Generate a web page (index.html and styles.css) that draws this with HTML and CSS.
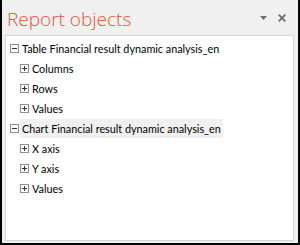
FILE: index.html
```html
<!DOCTYPE html>
<html>
<head>
<meta charset="utf-8">
<link rel="stylesheet" href="styles.css">
</head>
<body>
<div class="panel">
  <div class="header">
    <div class="title">Report objects</div>
    <div class="tools">
      <svg class="ico" width="7" height="4" viewBox="0 0 7 4"><path d="M0 0H7L3.5 4Z" fill="#6d6d6d"/></svg>
      <svg class="ico close" width="8" height="8" viewBox="0 0 8 8"><path d="M0.7 0.7L7.3 7.3M7.3 0.7L0.7 7.3" stroke="#6d6d6d" stroke-width="1.8"/></svg>
    </div>
  </div>
  <div class="box">
    <div class="node">
      <div class="row l0"><span class="tg minus"></span><span class="lbl">Table Financial result dynamic analysis_en</span></div>
      <div class="children">
        <div class="row l1"><span class="tg plus"></span><span class="lbl">Columns</span></div>
        <div class="row l1"><span class="tg plus"></span><span class="lbl">Rows</span></div>
        <div class="row l1"><span class="tg plus"></span><span class="lbl">Values</span></div>
      </div>
    </div>
    <div class="node">
      <div class="row l0"><span class="tg minus"></span><span class="lbl sel">Chart Financial result dynamic analysis_en</span></div>
      <div class="children">
        <div class="row l1"><span class="tg plus"></span><span class="lbl">X axis</span></div>
        <div class="row l1"><span class="tg plus"></span><span class="lbl">Y axis</span></div>
        <div class="row l1"><span class="tg plus"></span><span class="lbl">Values</span></div>
      </div>
    </div>
  </div>
</div>
</body>
</html>
```
FILE: styles.css
```css
html, body { margin: 0; padding: 0; }
body { width: 300px; height: 245px; overflow: hidden; }
.panel {
  box-sizing: border-box;
  width: 300px;
  height: 245px;
  background: #f0f0f0;
  border-left: 2px solid #000;
  border-right: 2px solid #000;
  border-bottom: 2px solid #000;
  display: flex;
  flex-direction: column;
  font-family: "Open Sans", sans-serif;
}
.header {
  height: 35px;
  display: flex;
  align-items: flex-start;
  justify-content: space-between;
}
.title {
  color: #e8513b;
  font-size: 19px;
  font-weight: 300;
  line-height: 26px;
  margin-left: 5px;
  margin-top: 6px;
}
.tools {
  display: flex;
  align-items: center;
  gap: 11px;
  margin-top: 14px;
  margin-right: 12px;
}
.box {
  flex: 1;
  margin: 0 4px 2px 3px;
  background: #fff;
  border: 1px solid #d6d6d6;
  padding-top: 2px;
  font-family: "Lato", sans-serif;
  font-size: 10.8px;
  color: #000;
}
.row {
  display: flex;
  align-items: center;
  height: 20px;
}
.l0 { padding-left: 4px; }
.l1 { padding-left: 14px; }
.tg {
  box-sizing: border-box;
  width: 9px;
  height: 9px;
  border: 1px solid #8e8e8e;
  position: relative;
  margin-right: 1px;
  flex: none;
}
.tg::before {
  content: "";
  position: absolute;
  left: 1px; top: 3px;
  width: 5px; height: 1px;
  background: #333;
}
.plus::after {
  content: "";
  position: absolute;
  left: 3px; top: 1px;
  width: 1px; height: 5px;
  background: #333;
}
.lbl { padding: 0 2px; line-height: 19px; }
.sel { background: #f0f0f0; }
```
